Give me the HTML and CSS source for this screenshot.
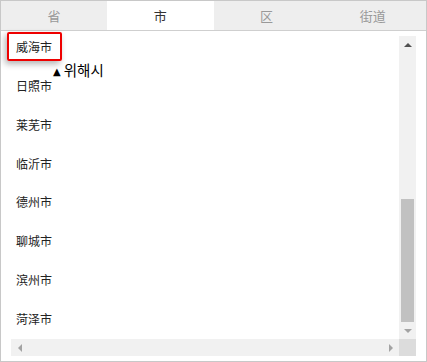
FILE: index.html
```html
<!DOCTYPE html>
<html lang="zh-CN">
<head>
  <meta charset="UTF-8">
  <title>地区选择</title>
  <link rel="stylesheet" href="styles.css">
</head>
<body>
  <div class="picker">
    <div class="tabs">
      <span class="tab">省</span>
      <span class="tab active">市</span>
      <span class="tab">区</span>
      <span class="tab">街道</span>
    </div>
    <div class="pane">
      <div class="scroller">
        <ul class="city-list">
          <li>威海市</li>
          <li>日照市</li>
          <li>莱芜市</li>
          <li>临沂市</li>
          <li>德州市</li>
          <li>聊城市</li>
          <li>滨州市</li>
          <li>菏泽市</li>
        </ul>
        <div class="vbar">
          <span class="btn"><i class="arrow up"></i></span>
          <span class="vtrack"><span class="thumb"></span></span>
          <span class="btn"><i class="arrow down"></i></span>
        </div>
        <div class="hbar">
          <span class="btn"><i class="arrow left"></i></span>
          <span class="htrack"></span>
          <span class="btn"><i class="arrow right"></i></span>
        </div>
        <div class="corner"></div>
      </div>
    </div>
    <!-- highlight + translation note over the list -->
    <div class="highlight"></div>
    <div class="note"><span class="caret">▲</span>위해시</div>
  </div>
</body>
</html>
```

FILE: styles.css
```css
body, html {
  margin: 0;
  padding: 0;
  background: #fff;
  font-family: "Noto Sans CJK SC", "Liberation Sans", sans-serif;
}
.picker {
  position: relative;
  width: 427px;
  height: 362px;
  box-sizing: border-box;
  border: 1px solid #c8c8c8;
  display: flex;
  flex-direction: column;
}
.tabs {
  display: grid;
  grid-template-columns: repeat(4, 1fr);
  height: 29px;
  border-bottom: 1px solid #cfcfcf;
}
.tab {
  background: #eeeeee;
  color: #999;
  font-size: 13px;
  line-height: 29px;
  text-align: center;
}
.tab.active {
  background: #fff;
  color: #333;
}
.pane {
  flex: 1;
  padding: 5px 10px;
  display: flex;
  min-height: 0;
}
.scroller {
  flex: 1;
  display: grid;
  grid-template-columns: 1fr 17px;
  grid-template-rows: 1fr 17px;
  min-height: 0;
}
.city-list {
  list-style: none;
  margin: 0;
  padding: 0;
  display: flex;
  flex-direction: column;
  justify-content: flex-end;
  overflow: hidden;
}
.city-list li {
  flex-shrink: 0;
  height: 38.9px;
  line-height: 38.9px;
  padding-left: 5px;
  font-size: 12px;
  color: #222;
}
.vbar, .hbar {
  background: #f1f1f1;
  display: flex;
}
.vbar {
  flex-direction: column;
}
.btn {
  width: 17px;
  height: 17px;
  flex-shrink: 0;
  display: flex;
  align-items: center;
  justify-content: center;
}
.vtrack {
  flex: 1;
  display: flex;
  flex-direction: column;
  justify-content: flex-end;
  align-items: center;
}
.thumb {
  width: 13px;
  height: 123px;
  background: #c1c1c1;
}
.htrack {
  flex: 1;
}
.corner {
  background: #dcdcdc;
}
.arrow {
  width: 0;
  height: 0;
  border: 4px solid transparent;
}
.arrow.up {
  border-top-width: 0;
  border-bottom-color: #505050;
}
.arrow.down {
  border-bottom-width: 0;
  border-top-color: #a3a3a3;
}
.arrow.left {
  border-left-width: 0;
  border-right-color: #a3a3a3;
}
.arrow.right {
  border-right-width: 0;
  border-left-color: #a3a3a3;
}
.highlight {
  position: absolute;
  left: 6px;
  top: 31px;
  width: 51px;
  height: 25px;
  border: 2px solid #ee0000;
  border-radius: 2px;
  box-shadow: -2px 3px 6px rgba(0, 0, 0, 0.3);
}
.note {
  position: absolute;
  left: 52px;
  top: 59px;
  font-family: "Noto Sans CJK KR", sans-serif;
  font-size: 14.5px;
  line-height: 20px;
  color: #000;
}
.caret {
  font-family: "DejaVu Sans", sans-serif;
  font-size: 10px;
  margin-right: 3px;
  vertical-align: 1px;
}
```
